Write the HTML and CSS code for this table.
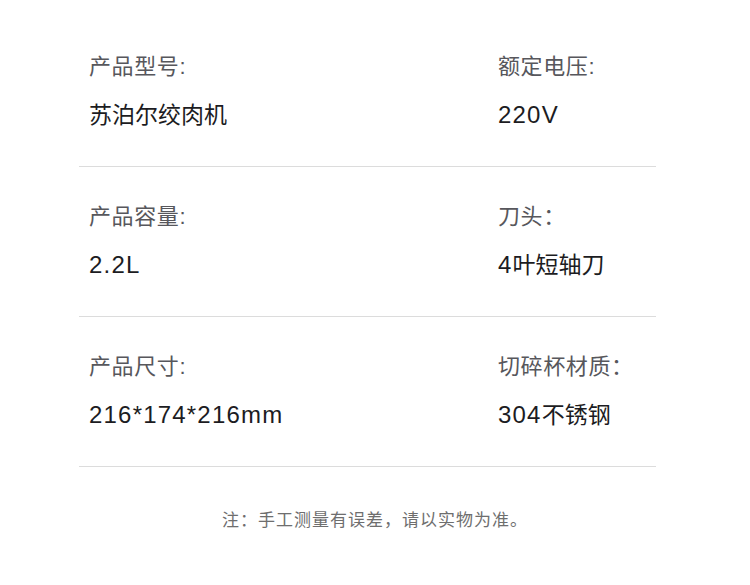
FILE: index.html
```html
<!DOCTYPE html>
<html lang="zh-CN">
<head>
<meta charset="utf-8">
<title>产品参数</title>
<link rel="stylesheet" href="styles.css">
</head>
<body>
<div class="page">
  <div class="specs">
    <div class="row">
      <div class="cell">
        <div class="label">产品型号:</div>
        <div class="value">苏泊尔绞肉机</div>
      </div>
      <div class="cell">
        <div class="label">额定电压:</div>
        <div class="value"><span class="num">220V</span></div>
      </div>
    </div>
    <div class="row">
      <div class="cell">
        <div class="label">产品容量:</div>
        <div class="value"><span class="num">2.2L</span></div>
      </div>
      <div class="cell">
        <div class="label">刀头：</div>
        <div class="value"><span class="num">4</span>叶短轴刀</div>
      </div>
    </div>
    <div class="row">
      <div class="cell">
        <div class="label">产品尺寸:</div>
        <div class="value"><span class="num">216*174*216mm</span></div>
      </div>
      <div class="cell">
        <div class="label">切碎杯材质：</div>
        <div class="value"><span class="num">304</span>不锈钢</div>
      </div>
    </div>
  </div>
  <p class="note">注：手工测量有误差，请以实物为准。</p>
</div>
</body>
</html>
```

FILE: styles.css
```css
html, body {
  margin: 0;
  padding: 0;
  background: #ffffff;
}
body {
  font-family: "Liberation Sans", "Noto Sans CJK SC", sans-serif;
}
.page {
  width: 750px;
  height: 585px;
  padding-top: 17px;
  box-sizing: border-box;
}
.specs {
  margin-left: 79px;
  width: 577px;
}
.row {
  display: grid;
  grid-template-columns: 409px 1fr;
  height: 150px;
  box-sizing: border-box;
  padding: 35px 0 0 10px;
  border-bottom: 1px solid #dcdcdc;
}
.cell {
  display: flex;
  flex-direction: column;
  gap: 18px;
}
.label {
  font-size: 22px;
  line-height: 30px;
  color: #57575c;
  letter-spacing: 0.6px;
}
.value {
  font-size: 23px;
  line-height: 30px;
  color: #1c1c22;
}
.num {
  font-size: 24px;
  letter-spacing: 1.2px;
}
.note {
  margin: 40px 0 0;
  text-align: center;
  font-size: 17px;
  line-height: 28px;
  color: #6e6e6e;
  letter-spacing: 1px;
}
```
